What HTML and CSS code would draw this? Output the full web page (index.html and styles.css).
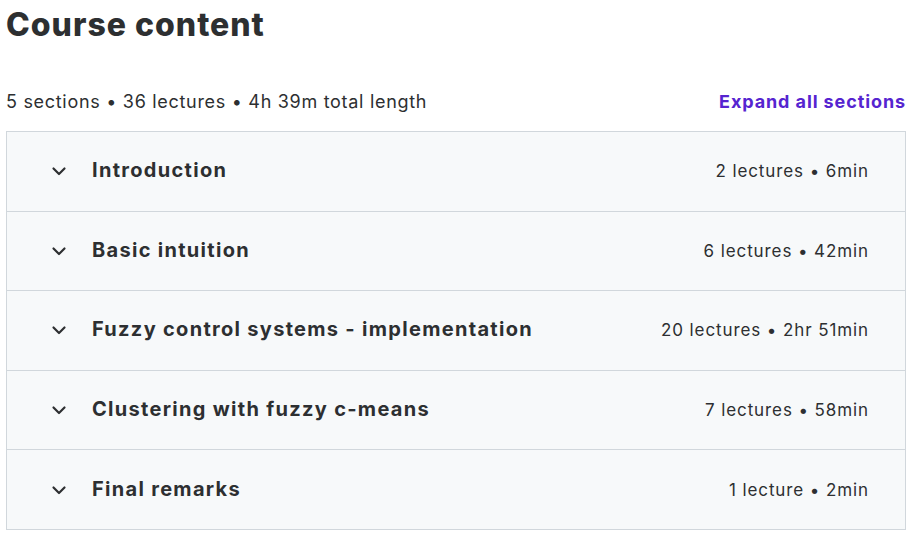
FILE: index.html
```html
<!DOCTYPE html>
<html>
<head>
<meta charset="utf-8">
<link rel="stylesheet" href="styles.css">
</head>
<body>
<div class="page">
  <h2 class="title">Course content</h2>
  <div class="summary">
    <span class="stats">5 sections • 36 lectures • 4h 39m total length</span>
    <a class="expand">Expand all sections</a>
  </div>
  <div class="sections">
    <div class="row">
      <svg class="chev" viewBox="0 0 24 24"><path d="M6.5 9.5 12 15l5.5-5.5"/></svg>
      <span class="name">Introduction</span>
      <span class="meta">2 lectures • 6min</span>
    </div>
    <div class="row">
      <svg class="chev" viewBox="0 0 24 24"><path d="M6.5 9.5 12 15l5.5-5.5"/></svg>
      <span class="name">Basic intuition</span>
      <span class="meta">6 lectures • 42min</span>
    </div>
    <div class="row">
      <svg class="chev" viewBox="0 0 24 24"><path d="M6.5 9.5 12 15l5.5-5.5"/></svg>
      <span class="name">Fuzzy control systems - implementation</span>
      <span class="meta">20 lectures • 2hr 51min</span>
    </div>
    <div class="row">
      <svg class="chev" viewBox="0 0 24 24"><path d="M6.5 9.5 12 15l5.5-5.5"/></svg>
      <span class="name">Clustering with fuzzy c-means</span>
      <span class="meta">7 lectures • 58min</span>
    </div>
    <div class="row">
      <svg class="chev" viewBox="0 0 24 24"><path d="M6.5 9.5 12 15l5.5-5.5"/></svg>
      <span class="name">Final remarks</span>
      <span class="meta">1 lecture • 2min</span>
    </div>
  </div>
</div>
</body>
</html>
```
FILE: styles.css
```css
html, body {
  margin: 0;
  padding: 0;
  background: #ffffff;
}
body {
  font-family: Inter, "Noto Sans", sans-serif;
  color: #2d2f31;
}
.page {
  width: 900px;
  margin-left: 6px;
}
.title {
  margin: 0;
  padding-top: 5px;
  font-size: 32px;
  line-height: 40px;
  font-weight: 800;
  letter-spacing: 1px;
}
.summary {
  display: flex;
  justify-content: space-between;
  align-items: center;
  margin-top: 41px;
  height: 30px;
}
.stats {
  font-size: 18px;
  font-weight: 400;
  letter-spacing: 0.7px;
}
.expand {
  font-size: 18px;
  font-weight: 700;
  color: #5624d0;
  letter-spacing: 0.9px;
}
.sections {
  margin-top: 15px;
  border: 1px solid #d1d7dc;
  border-bottom: none;
}
.row {
  display: flex;
  align-items: center;
  height: 78.6px;
  background: #f7f9fa;
  border-bottom: 1px solid #d1d7dc;
  padding-left: 40px;
  padding-right: 36px;
}
.chev {
  width: 24px;
  height: 24px;
  fill: none;
  stroke: #2d2f31;
  stroke-width: 2.2;
  stroke-linecap: round;
  stroke-linejoin: round;
  margin-right: 21px;
}
.name {
  flex: 1;
  font-size: 20px;
  font-weight: 700;
  margin-top: -2px;
  letter-spacing: 1.3px;
}
.meta {
  font-size: 17px;
  font-weight: 400;
  letter-spacing: 0.9px;
}
```
